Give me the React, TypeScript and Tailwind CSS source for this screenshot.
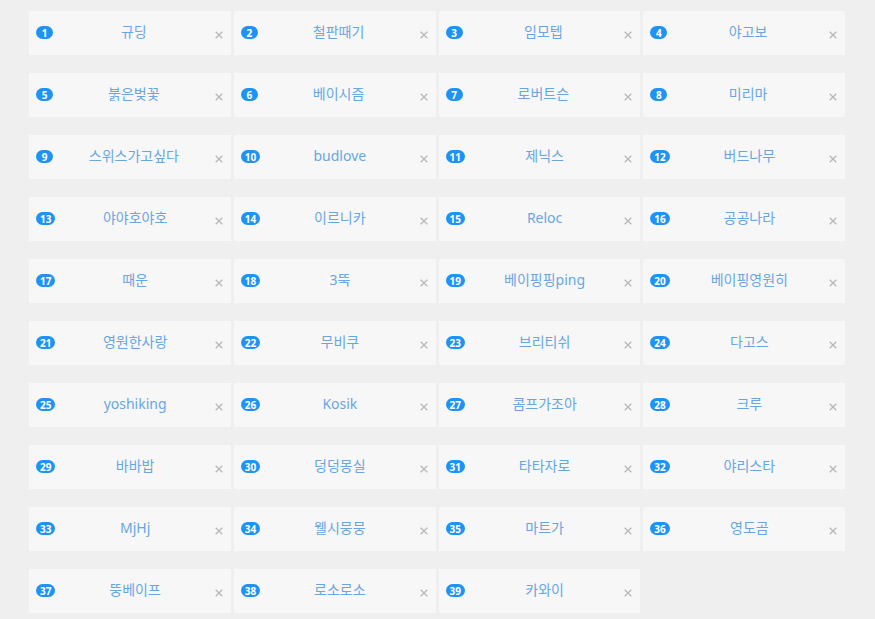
import React from "react";

const names = [
  "규딩", "철판때기", "임모텝", "야고보",
  "붉은벚꽃", "베이시즘", "로버트슨", "미리마",
  "스위스가고싶다", "budlove", "제닉스", "버드나무",
  "야야호야호", "이르니카", "Reloc", "공공나라",
  "때운", "3뚝", "베이핑핑ping", "베이핑영원히",
  "영원한사랑", "무비쿠", "브리티쉬", "다고스",
  "yoshiking", "Kosik", "콤프가조아", "크루",
  "바바밥", "덩덩몽실", "타타자로", "야리스타",
  "MjHj", "웰시뭉뭉", "마트가", "영도곰",
  "뚱베이프", "로소로소", "카와이",
];

export default function App() {
  return (
    <div
      className="min-h-[619px] w-full bg-[#efefef] pt-[11px] pl-[29px]"
      style={{ fontFamily: '"Noto Sans", "Noto Sans CJK KR", sans-serif' }}
    >
      <div className="grid w-[816px] grid-cols-4 gap-x-[3px] gap-y-[18px]">
        {names.map((n, i) => (
          <div
            key={i}
            className="flex h-[44px] items-center bg-[#f7f7f7] pl-[7px] pr-[8px]"
          >
            <span className="flex h-[13px] min-w-[17px] items-center justify-center rounded-full bg-[#1e93f5] px-[4px] text-[10px] font-bold leading-none text-white -mt-[1px]">
              {i + 1}
            </span>
            <span className="flex-1 text-center text-[14px] leading-none text-[#68a6e3] -mt-[2px]">
              {n}
            </span>
            <svg width="8" height="8" viewBox="0 0 8 8" className="mt-[4px]">
              <path d="M0.7 0.7 L7.3 7.3 M7.3 0.7 L0.7 7.3" stroke="#b8b8b8" strokeWidth="1.3" />
            </svg>
          </div>
        ))}
      </div>
    </div>
  );
}
